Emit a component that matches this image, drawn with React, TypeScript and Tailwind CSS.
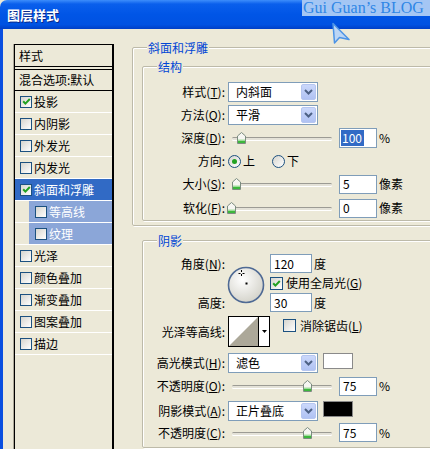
import type { ReactNode } from 'react'

function Check({ checked, small }: { checked?: boolean; small?: boolean }) {
  return (
    <span
      className={`${small ? 'w-[12px] h-[12px]' : 'w-[13px] h-[13px]'} shrink-0 border border-[#1c5180] bg-[linear-gradient(135deg,#d6d5ce,#ffffff)] flex items-center justify-center`}
    >
      {checked && (
        <svg width="9" height="9" viewBox="0 0 9 9">
          <path d="M1.2 4.2 L3.4 6.6 L7.8 2" fill="none" stroke="#21a121" strokeWidth="2" />
        </svg>
      )}
    </span>
  )
}

function Radio({ on }: { on?: boolean }) {
  return (
    <span className="w-[13px] h-[13px] shrink-0 rounded-full border border-[#1c5180] bg-[linear-gradient(135deg,#d6d5ce,#ffffff)] flex items-center justify-center">
      {on && <span className="w-[5px] h-[5px] rounded-full bg-[#21a121]" />}
    </span>
  )
}

function Select({ value }: { value: string }) {
  return (
    <div className="w-[90px] h-[20px] shrink-0 border border-[#7f9db9] bg-white flex items-center justify-between pl-[7px] pr-[1px]">
      <span>{value}</span>
      <span className="w-[15px] h-[16px] rounded-[2px] border border-[#b6c6f0] bg-[linear-gradient(to_bottom,#cbd8fb,#b0c2f3)] flex items-center justify-center">
        <svg width="9" height="6" viewBox="0 0 9 6">
          <path d="M1 1 L4.5 4.5 L8 1" fill="none" stroke="#4d6185" strokeWidth="2" />
        </svg>
      </span>
    </div>
  )
}

function Field({ value, wide, selected, tall }: { value: string; wide?: boolean; selected?: boolean; tall?: boolean }) {
  return (
    <div
      className={`${wide ? 'w-[42px]' : 'w-[38px]'} ${tall ? 'h-[20px]' : 'h-[19px]'} shrink-0 border border-[#7f9db9] bg-white flex items-center pl-[1px]`}
    >
      {selected ? (
        <span className="bg-[#316ac5] text-white h-[16px] flex items-center pl-[1px] pr-[2px]">{value}</span>
      ) : (
        <span className="pl-[2px]">{value}</span>
      )}
    </div>
  )
}

function Slider({ pos }: { pos: number }) {
  return (
    <div className="relative w-[108px] h-[20px] shrink-0">
      <div className="absolute left-[4px] right-[4px] top-[9px] h-[3px] rounded-full border-t border-[#9c9b94] bg-[#e4e2d8] shadow-[0_1px_0_#fff]" />
      <svg className="absolute top-[4px]" style={{ left: pos - 4.5 }} width="9" height="12" viewBox="0 0 9 12">
        <path d="M0.5 4 L4.5 0.5 L8.5 4 L8.5 11.5 L0.5 11.5 Z" fill="#f6f6f2" stroke="#7c8c80" />
        <rect x="1" y="8.5" width="7" height="2.5" fill="#3cb83c" />
        <rect x="1" y="7.5" width="7" height="1" fill="#a6e0a0" />
      </svg>
    </div>
  )
}

function Group({ title, className, children }: { title?: string; className: string; children: ReactNode }) {
  return (
    <div className={`relative border border-[#bdbaa9] rounded-[2px] shadow-[inset_1px_1px_0_#fff,1px_1px_0_#fff] ${className}`}>
      {title && (
        <span className="absolute left-[14px] top-[-7px] px-[1px] bg-[#ece9d8] text-[#0046d5] leading-[13px]">
          {title}
        </span>
      )}
      {children}
    </div>
  )
}

function Row({ label, className, children }: { label: ReactNode; className: string; children: ReactNode }) {
  return (
    <div className={`flex items-center ${className}`}>
      <span className="w-[82px] shrink-0 text-right whitespace-nowrap">{label}</span>
      <div className="ml-[3px] flex items-center">{children}</div>
    </div>
  )
}

function Dial() {
  return (
    <svg width="38" height="38" viewBox="0 0 38 38">
      <defs>
        <radialGradient id="dial" cx="40%" cy="35%" r="70%">
          <stop offset="0" stopColor="#ffffff" />
          <stop offset="1" stopColor="#d2d1c8" />
        </radialGradient>
      </defs>
      <circle cx="19" cy="19" r="17.5" fill="url(#dial)" stroke="#4f6a94" strokeWidth="1.6" />
      <path d="M14.5 4 V6 M14.5 8 V10 M11.5 7.5 H13.5 M15.5 7.5 H17.5" stroke="#000" strokeWidth="1" />
      <rect x="18.5" y="16.5" width="2" height="2" fill="#000" />
    </svg>
  )
}

function Contour() {
  return (
    <div className="w-[42px] h-[31px] shrink-0 border border-black bg-white flex">
      <svg width="29" height="29" viewBox="0 0 29 29">
        <polygon points="0,29 29,0 29,29" fill="#aca899" />
      </svg>
      <div className="flex-1 border-l border-black flex items-center justify-center">
        <svg width="5" height="3" viewBox="0 0 5 3">
          <polygon points="0,0 5,0 2.5,3" fill="#000" />
        </svg>
      </div>
    </div>
  )
}

const effects: { name: string; checked?: boolean; selected?: boolean; sub?: boolean }[] = [
  { name: '投影', checked: true },
  { name: '内阴影' },
  { name: '外发光' },
  { name: '内发光' },
  { name: '斜面和浮雕', checked: true, selected: true },
  { name: '等高线', sub: true },
  { name: '纹理', sub: true },
  { name: '光泽' },
  { name: '颜色叠加' },
  { name: '渐变叠加' },
  { name: '图案叠加' },
  { name: '描边' },
]

function LeftPanel() {
  return (
    <div className="ml-[11px] mt-[15px] w-[100px] h-[410px] shrink-0 border-l border-r-2 border-black shadow-[-1px_0_0_#aca899] flex flex-col">
      <div className="h-[23px] border-t border-b border-black flex items-center pl-[4px]">样式</div>
      <div className="h-[2px]" />
      <div className="h-[22px] border-t border-b border-black flex items-center pl-[4px] whitespace-nowrap">混合选项:默认</div>
      {effects.map((e) =>
        e.sub ? (
          <div key={e.name} className="h-[22px] border-b border-white flex">
            <div className="w-[14px]" />
            <div className="flex-1 bg-[#8ba6d8] text-white flex items-center pl-[6px] gap-[2px]">
              <Check small />
              <span>{e.name}</span>
            </div>
          </div>
        ) : (
          <div
            key={e.name}
            className={`h-[22px] border-b border-white flex items-center pl-[5px] gap-[2px] ${e.selected ? 'bg-[#316ac5] text-white' : ''}`}
          >
            <Check small checked={e.checked} />
            <span>{e.name}</span>
          </div>
        ),
      )}
    </div>
  )
}

export default function App() {
  return (
    <div className="relative w-[430px] h-[449px] overflow-hidden bg-[#ece9d8] text-[12px] leading-none text-black font-['Noto_Sans_CJK_SC',sans-serif]">
      {/* Title bar */}
      <div className="h-[29px] rounded-tl-[7px] bg-[linear-gradient(to_bottom,#3d8dfb_0%,#0a5fec_14%,#0055e6_50%,#0052e2_85%,#003fc6_100%)] flex items-center pl-[7px]">
        <span className="text-white font-bold text-[13px] [text-shadow:1px_1px_0_#0a2a8a]">图层样式</span>
      </div>

      {/* Watermark */}
      <div className="absolute right-0 top-0 h-[16px] w-[128px] bg-[#a4c6f4] flex items-center pl-[1px]">
        <span className="text-[#2f86e6] text-[16px] leading-[16px] font-['Liberation_Serif',serif] whitespace-nowrap">Gui Guan’s BLOG</span>
      </div>

      <div className="flex h-[420px] border-l-[3px] border-[#0a4fe0]">
        <LeftPanel />

        <div className="ml-[18px] flex flex-col">
          <Group title="斜面和浮雕" className="mt-[18px] w-[310px] pl-[9px] pt-[18px] pb-[4px]">
            <Group title="结构" className="w-[300px] pt-[15px] pb-[2px]">
              <Row label={<>样式(<u>T</u>):</>} className="h-[20px]">
                <Select value="内斜面" />
              </Row>
              <Row label={<>方法(<u>Q</u>):</>} className="h-[20px] mt-[3px]">
                <Select value="平滑" />
              </Row>
              <Row label={<>深度(<u>D</u>):</>} className="h-[20px] mt-[3px]">
                <Slider pos={13} />
                <div className="ml-[3px]">
                  <Field value="100" selected tall />
                </div>
                <span className="ml-[2px]">%</span>
              </Row>
              <Row label="方向:" className="h-[26px]">
                <Radio on />
                <span className="ml-[2px]">上</span>
                <span className="ml-[17px]">
                  <Radio />
                </span>
                <span className="ml-[2px]">下</span>
              </Row>
              <Row label={<>大小(<u>S</u>):</>} className="h-[20px]">
                <Slider pos={8} />
                <div className="ml-[3px]">
                  <Field value="5" />
                </div>
                <span className="ml-[2px]">像素</span>
              </Row>
              <Row label={<>软化(<u>F</u>):</>} className="h-[20px] mt-[4px]">
                <Slider pos={3} />
                <div className="ml-[3px]">
                  <Field value="0" />
                </div>
                <span className="ml-[2px]">像素</span>
              </Row>
            </Group>
          </Group>

          <Group title="阴影" className="ml-[10px] mt-[14px] w-[300px] pt-[13px] pb-[5px]">
            <div className="flex h-[59px]">
              <div className="w-[82px] shrink-0 flex flex-col justify-between">
                <div className="h-[20px] flex items-center justify-end">角度(<u>N</u>):</div>
                <div className="h-[20px] flex items-center justify-end">高度:</div>
              </div>
              <div className="ml-[2px] mt-[12px]">
                <Dial />
              </div>
              <div className="ml-[5px] flex flex-col">
                <div className="h-[19px] flex items-center">
                  <Field value="120" wide />
                  <span className="ml-[2px]">度</span>
                </div>
                <div className="h-[20px] flex items-center">
                  <Check checked />
                  <span className="ml-[3px]">使用全局光(<u>G</u>)</span>
                </div>
                <div className="h-[19px] flex items-center">
                  <Field value="30" wide />
                  <span className="ml-[2px]">度</span>
                </div>
              </div>
            </div>

            <Row label="光泽等高线:" className="h-[31px] mt-[3px]">
              <Contour />
              <div className="ml-[13px] self-start mt-[3px] flex items-center">
                <Check />
                <span className="ml-[4px]">消除锯齿(<u>L</u>)</span>
              </div>
            </Row>

            <Row label={<>高光模式(<u>H</u>):</>} className="h-[20px] mt-[6px]">
              <Select value="滤色" />
              <span className="ml-[5px] self-start w-[30px] h-[16px] border border-[#8a8a8a] bg-white" />
            </Row>
            <Row label={<>不透明度(<u>O</u>):</>} className="h-[18px] mt-[4px]">
              <Slider pos={79} />
              <div className="ml-[3px]">
                <Field value="75" />
              </div>
              <span className="ml-[2px]">%</span>
            </Row>
            <Row label={<>阴影模式(<u>A</u>):</>} className="h-[20px] mt-[6px]">
              <Select value="正片叠底" />
              <span className="ml-[5px] self-start w-[30px] h-[16px] border border-[#8a8a8a] bg-black" />
            </Row>
            <Row label={<>不透明度(<u>C</u>):</>} className="h-[19px] mt-[2px]">
              <Slider pos={79} />
              <div className="ml-[3px]">
                <Field value="75" />
              </div>
              <span className="ml-[2px]">%</span>
            </Row>
          </Group>
        </div>
      </div>

      {/* Cursor */}
      <svg className="absolute left-[331px] top-[22px]" width="20" height="24" viewBox="0 0 20 24">
        <path d="M2 1.5 L3.5 21 L8.5 15.5 L18 17.5 Z" fill="#bcd6f5" stroke="#4d94e6" strokeWidth="1.5" strokeLinejoin="round" />
      </svg>
    </div>
  )
}
